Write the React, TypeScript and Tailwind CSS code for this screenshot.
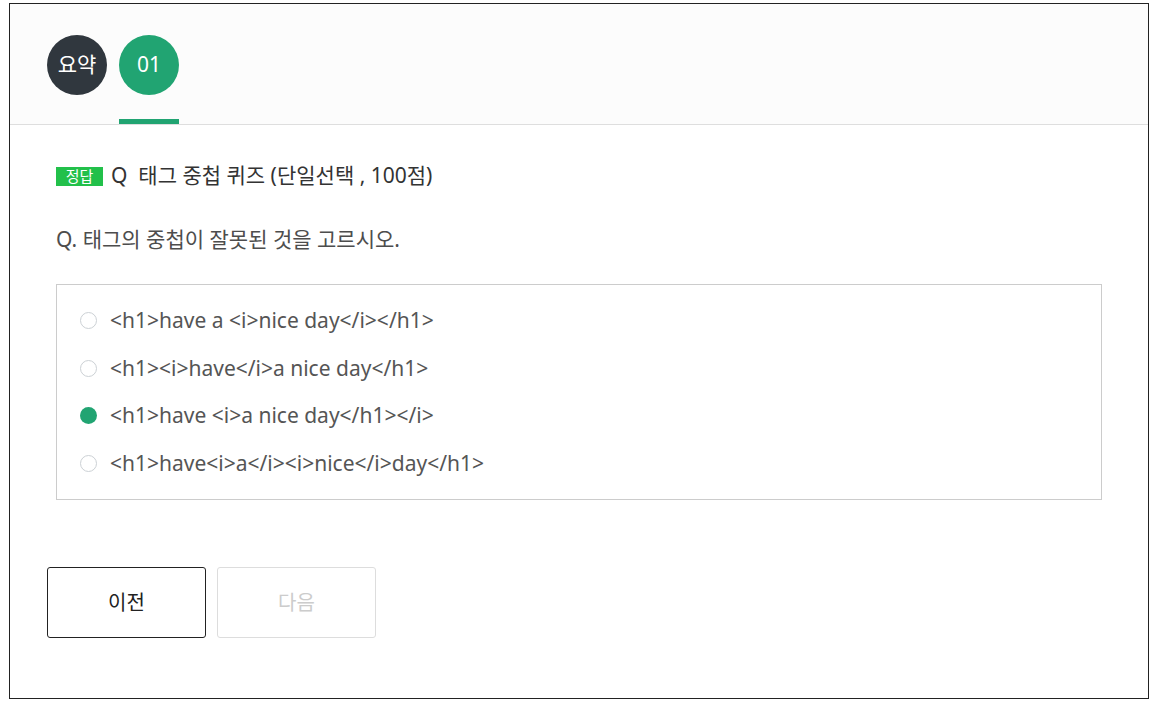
import { useState } from "react";

const options = [
  "<h1>have a <i>nice day</i></h1>",
  "<h1><i>have</i>a nice day</h1>",
  "<h1>have <i>a nice day</h1></i>",
  "<h1>have<i>a</i><i>nice</i>day</h1>",
];

export default function App() {
  const [selected, setSelected] = useState(2);

  return (
    <div
      className="pt-[3px] pl-[9px] bg-white min-h-screen"
      style={{ fontFamily: '"Noto Sans", "Noto Sans CJK KR", sans-serif' }}
    >
      <div className="w-[1140px] h-[696px] border border-[#222] flex flex-col">
        {/* tabs */}
        <div className="h-[121px] border-b border-[#dedede] bg-[#fcfcfc] flex gap-3 pl-[37px]">
          <div className="flex flex-col h-full pt-[31px]">
            <div className="w-[60px] h-[60px] rounded-full bg-[#30373e] text-white text-[21px] flex items-center justify-center">
              요약
            </div>
          </div>
          <div className="flex flex-col h-full pt-[31px]">
            <div className="w-[60px] h-[60px] rounded-full bg-[#21a472] text-white text-[21px] flex items-center justify-center">
              01
            </div>
            <div className="mt-auto h-[5px] w-[60px] bg-[#21a472]" />
          </div>
        </div>

        {/* question */}
        <div className="px-[46px] pt-[38px]">
          <div className="flex items-center h-[26px] text-[21px] text-[#333]">
            <span className="w-[47px] h-[19px] bg-[#22c04a] text-white text-[15px] leading-[19px] text-center mr-2">
              정답
            </span>
            <span className="whitespace-pre">Q  태그 중첩 퀴즈 (단일선택 , 100점)</span>
          </div>
          <p className="mt-[37px] h-[26px] leading-[26px] text-[21px] text-[#4d4d4d]">
            Q. 태그의 중첩이 잘못된 것을 고르시오.
          </p>

          <div className="mt-[32px] border border-[#ccc] py-[12px] pl-[23px]">
            {options.map((opt, i) => (
              <label
                key={i}
                className="h-[47.5px] flex items-center gap-[13px] text-[21px] text-[#555] cursor-pointer"
                onClick={() => setSelected(i)}
              >
                {selected === i ? (
                  <span className="w-[17px] h-[17px] rounded-full bg-[#21a472]" />
                ) : (
                  <span className="w-[17px] h-[17px] rounded-full border border-[#ccd1d5] bg-white" />
                )}
                <span>{opt}</span>
              </label>
            ))}
          </div>
        </div>

        {/* buttons */}
        <div className="flex gap-[11px] pl-[37px] mt-[67px]">
          <button className="w-[159px] h-[71px] border border-[#222] rounded-[3px] text-[20px] text-[#222] bg-white">
            이전
          </button>
          <button
            disabled
            className="w-[159px] h-[71px] border border-[#ddd] rounded-[3px] text-[20px] text-[#ccc] bg-white"
          >
            다음
          </button>
        </div>
      </div>
    </div>
  );
}
